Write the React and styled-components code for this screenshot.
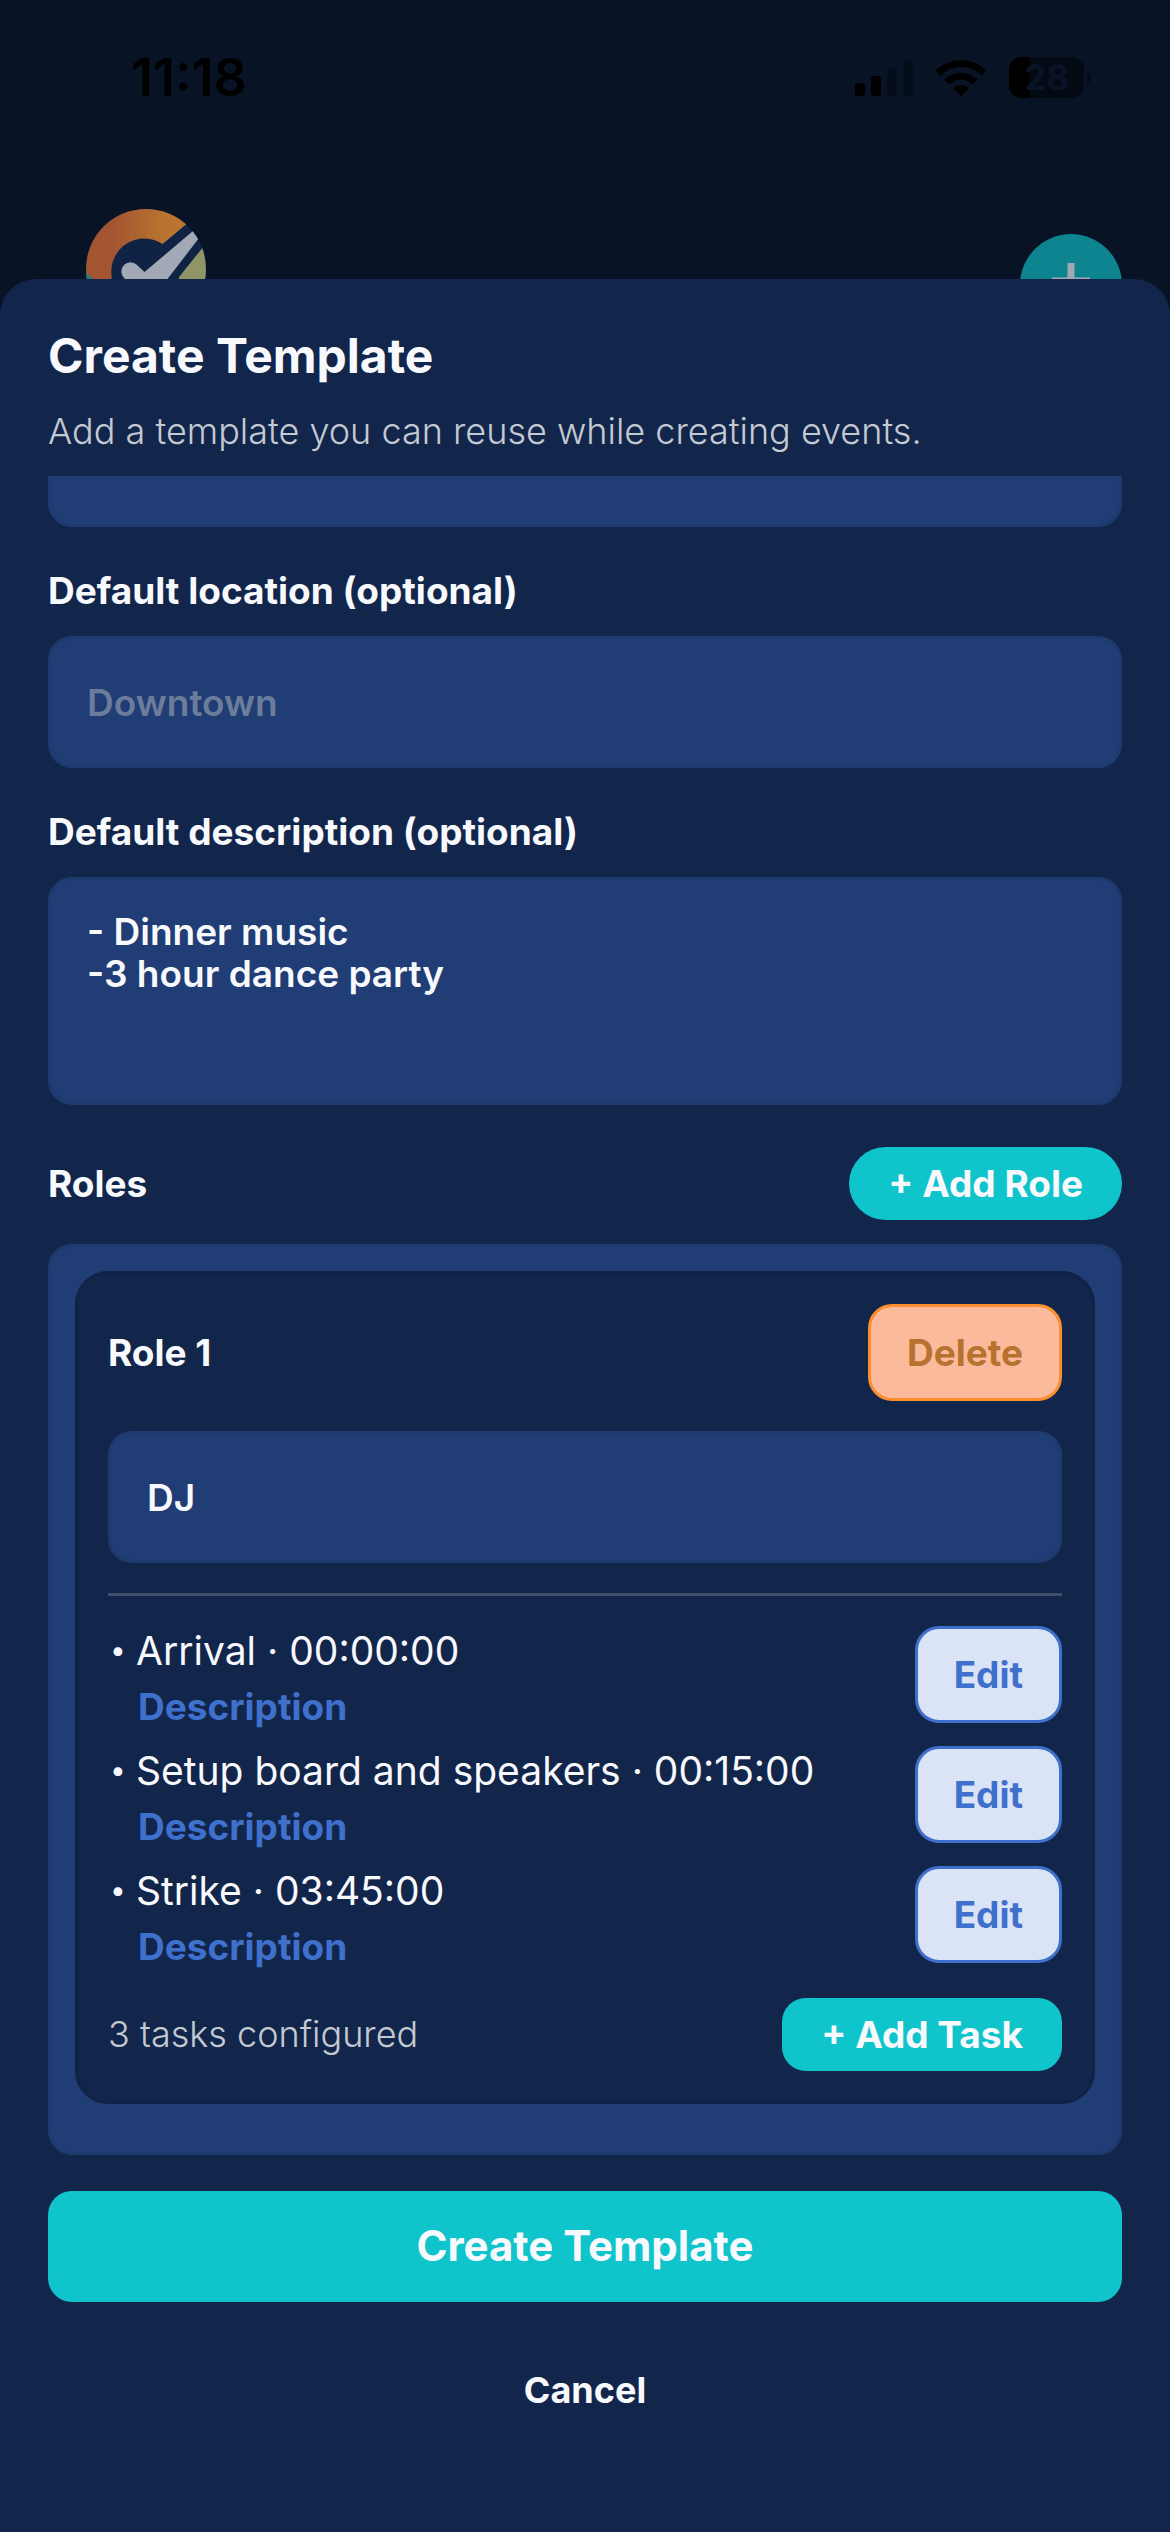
import React, { useState } from "react";
import styled, { createGlobalStyle, css } from "styled-components";

const color = {
  backdrop: "#081426",
  sheet: "#12264c",
  field: "#203d75",
  fieldBorder: "#1e3a6e",
  cardBorder: "#102346",
  text: "#f8f9fc",
  muted: "#c4c9d2",
  placeholder: "#6c7c9b",
  accent: "#10c4cc",
  link: "#3f70cc",
  divider: "#414e6b",
};

const GlobalStyle = createGlobalStyle`
  * { box-sizing: border-box; }
  body { margin: 0; background: ${color.backdrop}; }
  body, button, input, textarea {
    font-family: Inter, "Liberation Sans", sans-serif;
  }
`;

const Screen = styled.div`
  display: flex;
  flex-direction: column;
  min-height: 100vh;
  color: ${color.text};
`;

const StatusBar = styled.div`
  display: flex;
  justify-content: space-between;
  align-items: center;
  height: 156px;
  padding: 0 78px 0 131px;
  color: #000;
`;

const Clock = styled.time`
  font-size: 52px;
  line-height: 60px;
  font-weight: 600;
`;

const StatusIcons = styled.div`
  display: flex;
  align-items: center;
  gap: 22px;
`;

const AppBar = styled.header`
  display: flex;
  justify-content: space-between;
  align-items: flex-end;
  height: 180px;
  padding: 0 48px 0 86px;
`;

const RoundButton = styled.button`
  display: grid;
  place-items: center;
  width: 102px;
  height: 102px;
  padding: 0;
  border: 0;
  border-radius: 50%;
  background: #0d8490;
`;

const Sheet = styled.main`
  flex: 1;
  position: relative;
  margin-top: -57px;
  padding: 47px 48px 84px;
  border-radius: 36px 36px 0 0;
  background: ${color.sheet};
`;

const Title = styled.h1`
  margin: 0;
  font-size: 48px;
  line-height: 60px;
  font-weight: 700;
`;

const Subtitle = styled.p`
  margin: 18px 0;
  font-size: 36px;
  line-height: 54px;
  font-weight: 300;
  color: ${color.muted};
`;

const ScrollArea = styled.div`
  overflow: hidden;
`;

const Form = styled.form`
  display: flex;
  flex-direction: column;
  gap: 42px;
  margin-top: -81px;
`;

const Field = styled.div`
  display: flex;
  flex-direction: column;
  gap: 24px;
`;

const labelText = css`
  margin: 0;
  font-size: 37px;
  line-height: 43px;
  font-weight: 700;
`;

const Label = styled.label`
  ${labelText}
`;

const Heading = styled.h2`
  ${labelText}
`;

const fieldBox = css`
  display: block;
  width: 100%;
  border: 3px solid ${color.fieldBorder};
  border-radius: 24px;
  outline: none;
  background: ${color.field};
  color: ${color.text};
  font-size: 37px;
  font-weight: 600;
  &::placeholder {
    color: ${color.placeholder};
    opacity: 1;
  }
`;

const TextInput = styled.input`
  ${fieldBox}
  height: 132px;
  padding: 0 36px;
`;

const TextArea = styled.textarea`
  ${fieldBox}
  height: 228px;
  padding: 31px 36px;
  line-height: 42px;
  resize: none;
`;

const Row = styled.div`
  display: flex;
  justify-content: space-between;
  align-items: center;
`;

const tones = {
  accent: css`
    height: 73px;
    padding: 0 39px;
    border: 0;
    background: ${color.accent};
    color: ${color.text};
  `,
  danger: css`
    height: 97px;
    padding: 0 36px;
    border: 3px solid #fb8f2d;
    background: #fcba9d;
    color: #b8722f;
  `,
  soft: css`
    height: 97px;
    padding: 0 36px;
    border: 3px solid ${color.link};
    background: #dbe3f7;
    color: ${color.link};
  `,
};

const Button = styled.button`
  flex: none;
  border-radius: ${(p) => (p.$pill ? "37px" : "24px")};
  font-size: 37px;
  line-height: 43px;
  font-weight: 700;
  ${(p) => tones[p.$tone]}
`;

const RolesPanel = styled.div`
  padding: 24px 24px 48px;
  border: 3px solid ${color.fieldBorder};
  border-radius: 24px;
  background: ${color.field};
`;

const RoleCard = styled.section`
  display: flex;
  flex-direction: column;
  gap: 30px;
  padding: 30px;
  border: 3px solid ${color.cardBorder};
  border-radius: 33px;
  background: ${color.sheet};
`;

const Divider = styled.hr`
  width: 100%;
  height: 3px;
  margin: 0;
  border: 0;
  background: ${color.divider};
`;

const TaskList = styled.ul`
  display: flex;
  flex-direction: column;
  gap: 18px;
  margin: 0;
  padding: 0;
  list-style: none;
`;

const TaskItem = styled.li`
  display: flex;
  justify-content: space-between;
  align-items: flex-start;
`;

const TaskText = styled.div`
  display: flex;
  flex-direction: column;
  align-items: flex-start;
  gap: 10px;
`;

const TaskName = styled.span`
  display: flex;
  font-size: 39px;
  line-height: 49px;
`;

const Bullet = styled.span`
  width: 28px;
  padding-left: 2px;
  font-size: 28px;
`;

const TaskLink = styled.a`
  padding-left: 30px;
  font-size: 37px;
  line-height: 43px;
  font-weight: 700;
  color: ${color.link};
  text-decoration: none;
`;

const Count = styled.span`
  font-size: 36px;
  line-height: 43px;
  font-weight: 300;
  color: ${color.muted};
`;

const Actions = styled.div`
  display: flex;
  flex-direction: column;
  gap: 33px;
  margin-top: 36px;
`;

const ActionButton = styled.button`
  width: 100%;
  height: 111px;
  padding: 0 0 2px;
  border: 0;
  border-radius: 24px;
  background: ${(p) => (p.$primary ? color.accent : "transparent")};
  color: ${color.text};
  font-size: ${(p) => (p.$primary ? "42px" : "36px")};
  font-weight: 700;
`;

function Signal() {
  return (
    <svg width="58" height="38" viewBox="0 0 58 38" aria-hidden="true">
      <rect x="0" y="24" width="10" height="13" rx="3" />
      <rect x="16" y="17" width="10" height="20" rx="3" />
      <rect x="32" y="9" width="10" height="28" rx="3" opacity=".3" />
      <rect x="48" y="1" width="10" height="36" rx="3" opacity=".3" />
    </svg>
  );
}

function Wifi() {
  return (
    <svg width="52" height="38" viewBox="0 0 52 38" aria-hidden="true">
      <path d="M0.5 11.5a36.5 36.5 0 0 1 51 0l-4.800 5a29.500 29.500 0 0 0-41.400 0z" />
      <path d="M9.300 20.500a24 24 0 0 1 33.400 0l-4.900 5a17 17 0 0 0-23.600 0z" />
      <path d="M18 29.500a11.500 11.500 0 0 1 16 0l-8 8z" />
    </svg>
  );
}

function Battery() {
  return (
    <svg width="83" height="42" viewBox="0 0 83 42" aria-hidden="true">
      <rect width="75" height="41" rx="13" opacity=".5" />
      <path d="M13 0h8v41h-8a13 13 0 0 1-13-13v-15a13 13 0 0 1 13-13z" />
      <path d="M78 15a7 7 0 0 1 0 12z" opacity=".5" />
      <text x="38" y="33" textAnchor="middle" fontSize="35" fontWeight="700" fill={color.backdrop}>28</text>
    </svg>
  );
}

function Logo() {
  return (
    <svg width="120" height="127" viewBox="0 0 120 127" role="img" aria-label="Logo">
      <defs>
        <linearGradient id="ring" x1="0" x2="1">
          <stop offset="0.300" stopColor="#a35532" />
          <stop offset="0.800" stopColor="#b9752f" />
        </linearGradient>
        <clipPath id="disc">
          <circle cx="60" cy="60" r="60" />
        </clipPath>
      </defs>
      <g clipPath="url(#disc)">
        <circle cx="60" cy="60" r="60" fill="#0f2344" />
        <path d="M100 15.500 76.500 35a33 33 0 0 0-51 31v14H-5V-5H100z" fill="url(#ring)" />
        <path d="M0 63l10 12H0z" fill="#0d8490" />
        <path d="M118 37 93 68v20h30V37z" fill="#8f9567" />
        <path d="M107 22l6 7-33 43-12 14q-4 4-9 0L38 69a9 9 0 0 1 13-13l7.500 7z" fill="#a2a8b5" />
      </g>
    </svg>
  );
}

const initialTasks = [
  { name: "Arrival", offset: "00:00:00" },
  { name: "Setup board and speakers", offset: "00:15:00" },
  { name: "Strike", offset: "03:45:00" },
];

export default function App() {
  const [name, setName] = useState("");
  const [location, setLocation] = useState("");
  const [description, setDescription] = useState("- Dinner music\n-3 hour dance party");
  const [role, setRole] = useState("DJ");

  return (
    <Screen>
      <GlobalStyle />
      <StatusBar>
        <Clock>11:18</Clock>
        <StatusIcons>
          <Signal />
          <Wifi />
          <Battery />
        </StatusIcons>
      </StatusBar>
      <AppBar>
        <Logo />
        <RoundButton type="button" aria-label="Add">
          <svg width="38" height="46" viewBox="0 0 38 46" aria-hidden="true">
            <path d="M19 1v37M0 19h38" stroke="#a2a8b5" strokeWidth="7" />
          </svg>
        </RoundButton>
      </AppBar>
      <Sheet>
        <Title>Create Template</Title>
        <Subtitle>Add a template you can reuse while creating events.</Subtitle>
        <ScrollArea>
          <Form id="template-form" onSubmit={(e) => e.preventDefault()}>
            <TextInput aria-label="Name" value={name} onChange={(e) => setName(e.target.value)} />
            <Field>
              <Label htmlFor="location">Default location (optional)</Label>
              <TextInput id="location" placeholder="Downtown" value={location} onChange={(e) => setLocation(e.target.value)} />
            </Field>
            <Field>
              <Label htmlFor="description">Default description (optional)</Label>
              <TextArea id="description" value={description} onChange={(e) => setDescription(e.target.value)} />
            </Field>
            <Field>
              <Row>
                <Heading>Roles</Heading>
                <Button type="button" $tone="accent" $pill>+ Add Role</Button>
              </Row>
              <RolesPanel>
                <RoleCard>
                  <Row>
                    <Label htmlFor="role-1">Role 1</Label>
                    <Button type="button" $tone="danger">Delete</Button>
                  </Row>
                  <TextInput id="role-1" value={role} onChange={(e) => setRole(e.target.value)} />
                  <Divider />
                  <TaskList>
                    {initialTasks.map((task) => (
                      <TaskItem key={task.name}>
                        <TaskText>
                          <TaskName>
                            <Bullet>•</Bullet>
                            {task.name} · {task.offset}
                          </TaskName>
                          <TaskLink href="#description">Description</TaskLink>
                        </TaskText>
                        <Button type="button" $tone="soft">Edit</Button>
                      </TaskItem>
                    ))}
                  </TaskList>
                  <Row>
                    <Count>{initialTasks.length} tasks configured</Count>
                    <Button type="button" $tone="accent">+ Add Task</Button>
                  </Row>
                </RoleCard>
              </RolesPanel>
            </Field>
          </Form>
        </ScrollArea>
        <Actions>
          <ActionButton type="submit" form="template-form" $primary>Create Template</ActionButton>
          <ActionButton type="button">Cancel</ActionButton>
        </Actions>
      </Sheet>
    </Screen>
  );
}
